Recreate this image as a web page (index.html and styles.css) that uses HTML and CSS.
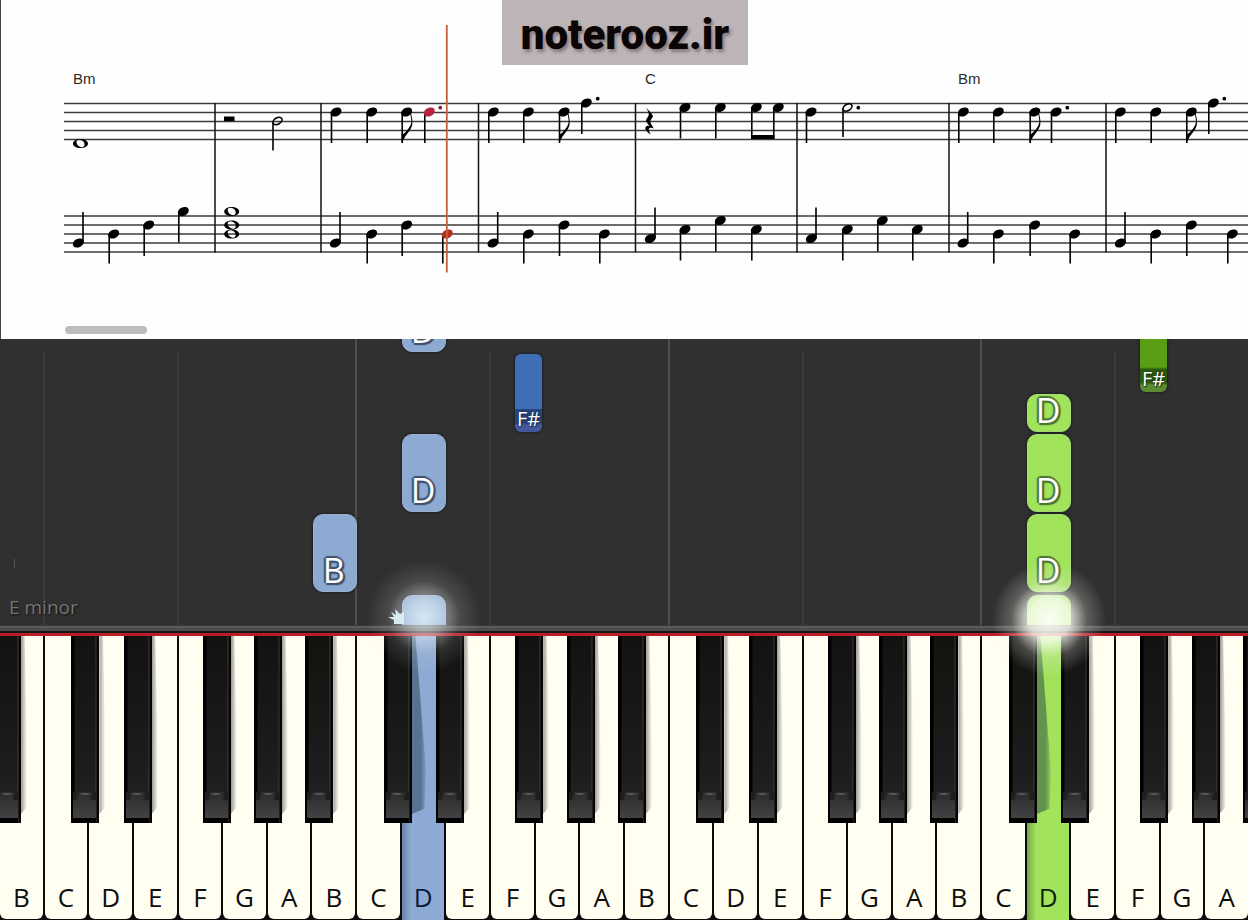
FILE: index.html
```
<!DOCTYPE html>
<html lang="en">
<head>
<meta charset="utf-8">
<title>noterooz.ir</title>
<link rel="stylesheet" href="styles.css">
</head>
<body>
<main class="player">
  <section class="score" aria-label="Sheet music">
    <svg class="sheet" viewBox="0 0 1248 339">
      <defs>
        <ellipse id="head" rx="5.800" ry="4.200" transform="rotate(-28)"/>
        <g id="dn"><use href="#head"/><path d="M-5.300 0h1.600v31h-1.600z"/></g>
        <g id="ds"><use href="#head"/><path d="M-5.300 0h1.600v29.500h-1.600z"/></g>
        <g id="up"><use href="#head"/><path d="M3.900 0h1.600v-31h-1.600z"/></g>
        <g id="fl"><use href="#dn"/><path d="M3.200 0L4.300 1C5 5 6.400 9 5.400 13.500C4.200 18 .5 21.500-1.500 24.500L-5 31V22.500C-1.500 21.500 3.500 15.500 4.500 11C5 8 4 4 3.200 0z"/></g>
        <g id="whole"><path fill-rule="evenodd" d="M-7.500 0C-7.500-2.800-4-4.600 0-4.600S7.500-2.800 7.500 0 4 4.600 0 4.600-7.500 2.800-7.500 0zM-4-1.400C-4 1.500-1 3.800 1.200 3.800 4.200 3.800 4.600 1 3.400-1.200 1.800-4-4-4.800-4-1.400z"/></g>
        <g id="half"><ellipse class="hollow" rx="4.900" ry="3.100" transform="rotate(-30)"/><path d="M-5.300 1h1.600v28.500h-1.600z"/></g>
        <circle id="dot" r="1.900"/>
      </defs>
      <path class="edge" d="M.5 0V339"/>
      <path class="staff" d="M64 103.500H1248M64 112.500H1248M64 121.500H1248M64 130.500H1248M64 139.500H1248M64 216H1248M64 225H1248M64 234H1248M64 243H1248M64 252H1248"/>
      <path class="bars" d="M215 103V252.500M321 103V252.500M478.500 103V252.500M635.500 103V252.500M797 103V252.500M949 103V252.500M1106 103V252.500"/>
      <text class="chord" x="73" y="84">Bm</text>
      <text class="chord" x="645" y="84">C</text>
      <text class="chord" x="958" y="84">Bm</text>

      <use href="#whole" x="80.500" y="143.500"/>
      <path d="M224 116.500h10.500v4.700h-10.500z"/>
      <use href="#half" x="277.500" y="121"/>
      <use href="#dn" x="336" y="112"/><use href="#dn" x="371.700" y="112"/><use href="#fl" x="406.700" y="112"/>
      <path d="M424 112h1.600v31h-1.600z"/><use class="hit" href="#head" x="429.300" y="112"/><use class="hit-dot" href="#dot" x="440.300" y="107.700"/>
      <use href="#dn" x="493.300" y="112"/><use href="#dn" x="528.300" y="112"/><use href="#fl" x="564" y="112"/><use href="#dn" x="586.300" y="103"/><use href="#dot" x="597.700" y="98.700"/>
      <path d="M646.300 107.500C648 110 651.500 112.500 653 116 652.500 118 650.500 119.500 650.300 121.500 650.500 124 652.500 125.500 653.800 128.500 651 127 648.500 127.500 648.800 130 649 132 650.200 133 651 134.500 648 133 645 130 645.300 128 645.800 125.500 648 125.500 649.500 126 648 124 646 121.500 646 120.500 646.500 118 648.800 116.500 648.800 114.500 648.800 112 647 109.500 646.300 107.500z"/>
      <use href="#dn" x="685" y="107.500"/><use href="#dn" x="720.300" y="107.500"/><use href="#dn" x="756.300" y="107.500"/><use href="#dn" x="778.300" y="107.500"/><path d="M751 135h23.500v4h-23.500z"/>
      <use href="#dn" x="811" y="112"/><use href="#half" x="847.500" y="107.500"/><use href="#dot" x="858.300" y="107.700"/>
      <use href="#dn" x="963.300" y="112"/><use href="#dn" x="998.300" y="112"/><use href="#fl" x="1034.700" y="112"/><use href="#dn" x="1056" y="112"/><use href="#dot" x="1067.300" y="107.700"/>
      <use href="#dn" x="1120.300" y="112"/><use href="#dn" x="1155.700" y="112"/><use href="#fl" x="1191.300" y="112"/><use href="#dn" x="1213.300" y="103"/><use href="#dot" x="1224.300" y="98.700"/>

      <use href="#up" x="78.300" y="243"/><use href="#ds" x="113.700" y="234"/><use href="#dn" x="148.700" y="225"/><use href="#dn" x="183.300" y="211.500"/>
      <use href="#whole" x="231.700" y="211.500"/><use href="#whole" x="231.700" y="225"/><use href="#whole" x="231.700" y="234"/>
      <use href="#up" x="335.300" y="243"/><use href="#ds" x="371.700" y="234"/><use href="#dn" x="406.700" y="225"/>
      <path d="M442 234h1.600v29.500h-1.600z"/><use class="hit-low" href="#head" x="447.300" y="234"/>
      <use href="#up" x="493" y="243"/><use href="#ds" x="528.300" y="234"/><use href="#dn" x="564" y="225"/><use href="#ds" x="604.300" y="234"/>
      <use href="#up" x="650.300" y="238.500"/><use href="#dn" x="685" y="229.500"/><use href="#dn" x="720.300" y="220.500"/><use href="#dn" x="756.300" y="229.500"/>
      <use href="#up" x="811.300" y="238.500"/><use href="#dn" x="847.300" y="229.500"/><use href="#dn" x="882.300" y="220.500"/><use href="#dn" x="917.300" y="229.500"/>
      <use href="#up" x="963" y="243"/><use href="#ds" x="998.300" y="234"/><use href="#dn" x="1034.700" y="225"/><use href="#ds" x="1074.700" y="234"/>
      <use href="#up" x="1120.300" y="243"/><use href="#ds" x="1155.700" y="234"/><use href="#dn" x="1191.300" y="225"/><use href="#ds" x="1232.300" y="234"/>
      <path class="cursor" d="M446.800 25V272.500"/>
      <rect class="thumb" x="65" y="326" width="82" height="8" rx="4"/>
    </svg>
    <div class="watermark">noterooz.ir</div>
  </section>

  <section class="stage">
    <div class="roll">
      <i class="lane lane-a dim"></i><i class="lane lane-b dim"></i><i class="lane lane-c"></i><i class="lane lane-d dim"></i>
      <i class="lane lane-e"></i><i class="lane lane-f dim"></i><i class="lane lane-g"></i><i class="lane lane-h dim"></i>
      <i class="tick"></i>
      <span class="scale">E minor</span>
      <div class="note blue low-d t5">D</div>
      <div class="note navy sharp low-f t4">F#</div>
      <div class="note blue low-d t3">D</div>
      <div class="note blue low-b t2">B</div>
      <div class="note blue low-d t1"></div>
      <div class="note forest sharp high-f t6">F#</div>
      <div class="note green high-d t4 short">D</div>
      <div class="note green high-d t3">D</div>
      <div class="note green high-d t2">D</div>
      <div class="note green high-d t1"></div>
    </div>
    <div class="rail"></div>
    <div class="keys">
      <div class="cell"><button class="white">B</button><button class="black before" aria-label="A sharp"></button></div>
      <div class="cell"><button class="white">C</button><button class="black cs" aria-label="C sharp"></button></div>
      <div class="cell"><button class="white">D</button><button class="black ds" aria-label="D sharp"></button></div>
      <div class="cell"><button class="white">E</button></div>
      <div class="cell"><button class="white">F</button><button class="black fs" aria-label="F sharp"></button></div>
      <div class="cell"><button class="white">G</button><button class="black gs" aria-label="G sharp"></button></div>
      <div class="cell"><button class="white">A</button><button class="black as" aria-label="A sharp"></button></div>
      <div class="cell"><button class="white">B</button></div>
      <div class="cell"><button class="white">C</button><button class="black cs deep" aria-label="C sharp"></button></div>
      <div class="cell"><button class="white on-blue">D</button><button class="black ds" aria-label="D sharp"></button></div>
      <div class="cell"><button class="white">E</button></div>
      <div class="cell"><button class="white">F</button><button class="black fs" aria-label="F sharp"></button></div>
      <div class="cell"><button class="white">G</button><button class="black gs" aria-label="G sharp"></button></div>
      <div class="cell"><button class="white">A</button><button class="black as" aria-label="A sharp"></button></div>
      <div class="cell"><button class="white">B</button></div>
      <div class="cell"><button class="white">C</button><button class="black cs" aria-label="C sharp"></button></div>
      <div class="cell"><button class="white">D</button><button class="black ds" aria-label="D sharp"></button></div>
      <div class="cell"><button class="white">E</button></div>
      <div class="cell"><button class="white">F</button><button class="black fs" aria-label="F sharp"></button></div>
      <div class="cell"><button class="white">G</button><button class="black gs" aria-label="G sharp"></button></div>
      <div class="cell"><button class="white">A</button><button class="black as" aria-label="A sharp"></button></div>
      <div class="cell"><button class="white">B</button></div>
      <div class="cell"><button class="white">C</button><button class="black cs deep" aria-label="C sharp"></button></div>
      <div class="cell"><button class="white on-green">D</button><button class="black ds" aria-label="D sharp"></button></div>
      <div class="cell"><button class="white">E</button></div>
      <div class="cell"><button class="white">F</button><button class="black fs" aria-label="F sharp"></button></div>
      <div class="cell"><button class="white">G</button><button class="black gs" aria-label="G sharp"></button></div>
      <div class="cell"><button class="white">A</button><button class="black as" aria-label="A sharp"></button></div>
    </div>
    <div class="glow glow-low">
      <svg class="spark" viewBox="0 0 16 18"><path d="M16 5L12 7 7 2 8 8 3 5 6 10 0 10 6 13 6 17 16 17z"/></svg>
    </div>
    <div class="glow glow-high"></div>
  </section>
</main>
</body>
</html>
```

FILE: styles.css
```
* { box-sizing: border-box; }

body {
  margin: 0;
  background: #303030;
  font-family: "Open Sans", "Noto Sans", sans-serif;
}

.player {
  display: flex;
  flex-direction: column;
  min-height: 100vh;
  overflow: hidden;
}

/* Sheet music */
.score {
  position: relative;
  background: #fefefe;
}

.sheet { display: block; width: 100%; height: auto; }
.edge { stroke: #444; stroke-width: 1; }
.staff { stroke: #3c3c3c; stroke-width: 1.3; }
.bars { stroke: #111; stroke-width: 1.5; }
.hollow { fill: none; stroke: #000; stroke-width: 1.6; }
.chord { font: 15px "Liberation Sans", sans-serif; fill: #2a2a2a; }
.hit { fill: #b5233c; }
.hit-dot { fill: #7c2a20; }
.hit-low { fill: #b5301f; }
.cursor { stroke: #c65f3c; stroke-width: 1.8; }
.thumb { fill: #bdbdbd; }

.watermark {
  position: absolute;
  top: 0;
  left: 50%;
  width: 246px;
  height: 65px;
  margin-left: -122px;
  background: #bcb4b7;
  color: #0b0506;
  font: 900 42px/69px Roboto, sans-serif;
  text-align: center;
  text-shadow: 2px 3px 3px rgba(60, 45, 50, .4);
}

/* Falling notes and keyboard share one 28-column width */
.stage {
  --key: calc(100% / 28);
  position: relative;
  display: flex;
  flex: 1;
  flex-direction: column;
  margin-right: -2px;
}

.roll {
  position: relative;
  height: 286px;
  overflow: hidden;
  background: #303030;
}

.lane {
  position: absolute;
  top: 0;
  bottom: 0;
  width: 2px;
  margin-left: -2px;
  background: #4e4e4e;
}
.lane.dim { top: 13px; background: #3b3b3b; }
.lane-a { left: calc(var(--key) * 1); }
.lane-b { left: calc(var(--key) * 4); }
.lane-c { left: calc(var(--key) * 8); }
.lane-d { left: calc(var(--key) * 11); }
.lane-e { left: calc(var(--key) * 15); }
.lane-f { left: calc(var(--key) * 18); }
.lane-g { left: calc(var(--key) * 22); }
.lane-h { left: calc(var(--key) * 25); }

.tick {
  position: absolute;
  left: 14px;
  bottom: 57px;
  width: 1px;
  height: 9px;
  background: #555;
}

.scale {
  position: absolute;
  left: 9px;
  bottom: 5px;
  color: #747474;
  font-size: 19px;
  line-height: 26px;
  text-shadow: 1px 1px 2px #111;
}

.note {
  position: absolute;
  display: flex;
  align-items: flex-end;
  justify-content: center;
  width: var(--key);
  height: 78px;
  padding: 0 2px 1px 0;
  border-radius: 10px;
  color: #fff;
  font-size: 34px;
  line-height: 40px;
  box-shadow: 0 0 2px 1px rgba(15, 20, 25, .5);
}
.blue {
  background: #8caad2;
  border: 1px solid #9aafd0;
  text-shadow: 2px 0 1px #41506c, -2px 0 1px #41506c, 0 2px 1px #41506c, 0 -2px 1px #41506c, 2px 2px 1px #41506c, -1px -1px 1px #41506c;
}
.green {
  background: #a2e35c;
  border: 1px solid #a9de70;
  text-shadow: 2px 0 1px #4b7432, -2px 0 1px #4b7432, 0 2px 1px #4b7432, 0 -2px 1px #4b7432, 2px 2px 1px #4b7432, -1px -1px 1px #4b7432;
}
.sharp {
  width: 27px;
  padding: 0;
  border-radius: 6px;
  font-size: 20px;
  line-height: 26px;
}
.navy {
  background: linear-gradient(#3e6fb6 70%, #26447c 71%, #26447c 88%, #44579c 91%);
  text-shadow: 0 0 2px #142850, 1px 1px 1px #142850;
}
.forest {
  background: linear-gradient(#5a9e14 68%, #2d5a10 71%, #2d5a10 88%, #5b8a35 91%);
  text-shadow: 0 0 2px #17350a, 1px 1px 1px #17350a;
}
.low-b { left: calc(var(--key) * 7); }
.low-d { left: calc(var(--key) * 9); }
.low-f { left: calc(var(--key) * 11.54); }
.high-d { left: calc(var(--key) * 23); }
.high-f { left: calc(var(--key) * 25.54); }
.t1 { bottom: -48px; }
.t2 { bottom: 33px; }
.t3 { bottom: 113px; }
.t4 { bottom: 193px; }
.t5 { bottom: 273px; }
.t6 { bottom: 233px; }
.short { height: 38px; }

.rail {
  height: 11px;
  background: linear-gradient(#3a3a3a 0 1px, #5a5a5a 1px 3px, #4c4c4c 3px 6px, #191515 6px 8px, #b81d28 8px);
}

.keys {
  display: grid;
  grid-template-columns: repeat(28, 1fr);
  flex: 1;
  min-height: 284px;
  background: #0c0c0a;
}

.cell { position: relative; display: flex; }

.white {
  flex: 1;
  display: flex;
  align-items: flex-end;
  justify-content: center;
  min-width: 0;
  margin: 0 2px 1px 0;
  padding: 0 0 4px 0;
  border: 0;
  border-radius: 0 0 6px 6px;
  background: #fffef1;
  color: #0d0d0d;
  font: 26px/36px "Open Sans", "Noto Sans", sans-serif;
}
.on-blue,
.on-green {
  margin-bottom: 0;
  padding-bottom: 5px;
  border-radius: 0;
}
.on-blue {
  background: linear-gradient(90deg, #6883a6, #8caad4 9px);
  color: #071b38;
}
.on-green {
  background: linear-gradient(90deg, #75a748, #a3e35c 9px);
  color: #10230a;
}

.black {
  position: absolute;
  z-index: 2;
  top: 0;
  width: 28px;
  height: 66%;
  padding: 0;
  border: 0;
  background: linear-gradient(90deg, #000 3px, transparent 4px 24px, #3d3b38 25px, #050505 26px), linear-gradient(#121211, #1d1c1c 70%, #252525);
}
.black::before {
  content: "";
  position: absolute;
  left: 2px;
  right: 3px;
  bottom: 0;
  height: 26px;
  border-bottom: 5px solid #000;
  background:
    radial-gradient(ellipse at center, #858585, transparent 70%) center 1px / 14px 2px no-repeat,
    linear-gradient(100deg, #1e1e1e 4px, transparent 6px 18px, #1e1e1e 20px) top / 100% 8px no-repeat,
    linear-gradient(#2b2b2b, #434242);
}
.black::after {
  content: "";
  position: absolute;
  top: 0;
  left: 100%;
  width: 6px;
  height: 95%;
  background: linear-gradient(90deg, rgba(60, 55, 60, .5), rgba(60, 55, 60, 0));
  clip-path: polygon(0 0, 60% 0, 100% 60%, 100% 96%, 0 100%);
}
.black.deep::after {
  width: 14px;
  background: linear-gradient(90deg, rgba(20, 50, 60, .45) 60%, rgba(20, 50, 60, .1));
  clip-path: polygon(0 0, 25% 0, 100% 75%, 90% 97%, 0 100%);
}
.before { left: -7px; }
.cs { left: 60%; }
.ds { left: 77%; }
.fs { left: 54%; }
.gs { left: 69%; }
.as { left: 84%; }

/* Light where a note meets the keyboard */
.glow {
  position: absolute;
  z-index: 3;
  width: 120px;
  height: 120px;
  margin-left: -60px;
  pointer-events: none;
}
.glow-low {
  left: calc(var(--key) * 9.5);
  top: 218px;
  background: radial-gradient(closest-side, rgba(240, 252, 255, .75), rgba(235, 242, 245, .5) 30%, rgba(220, 220, 220, .15) 60%, transparent 95%);
}
.glow-high {
  left: calc(var(--key) * 23.5);
  top: 220px;
  background: radial-gradient(closest-side, rgba(255, 255, 250, .95), rgba(252, 255, 245, .8) 35%, rgba(235, 235, 230, .25) 63%, transparent 95%);
}
.spark {
  position: absolute;
  left: 24px;
  top: 50px;
  width: 16px;
  height: 18px;
  fill: #d8eaf2;
}
```
